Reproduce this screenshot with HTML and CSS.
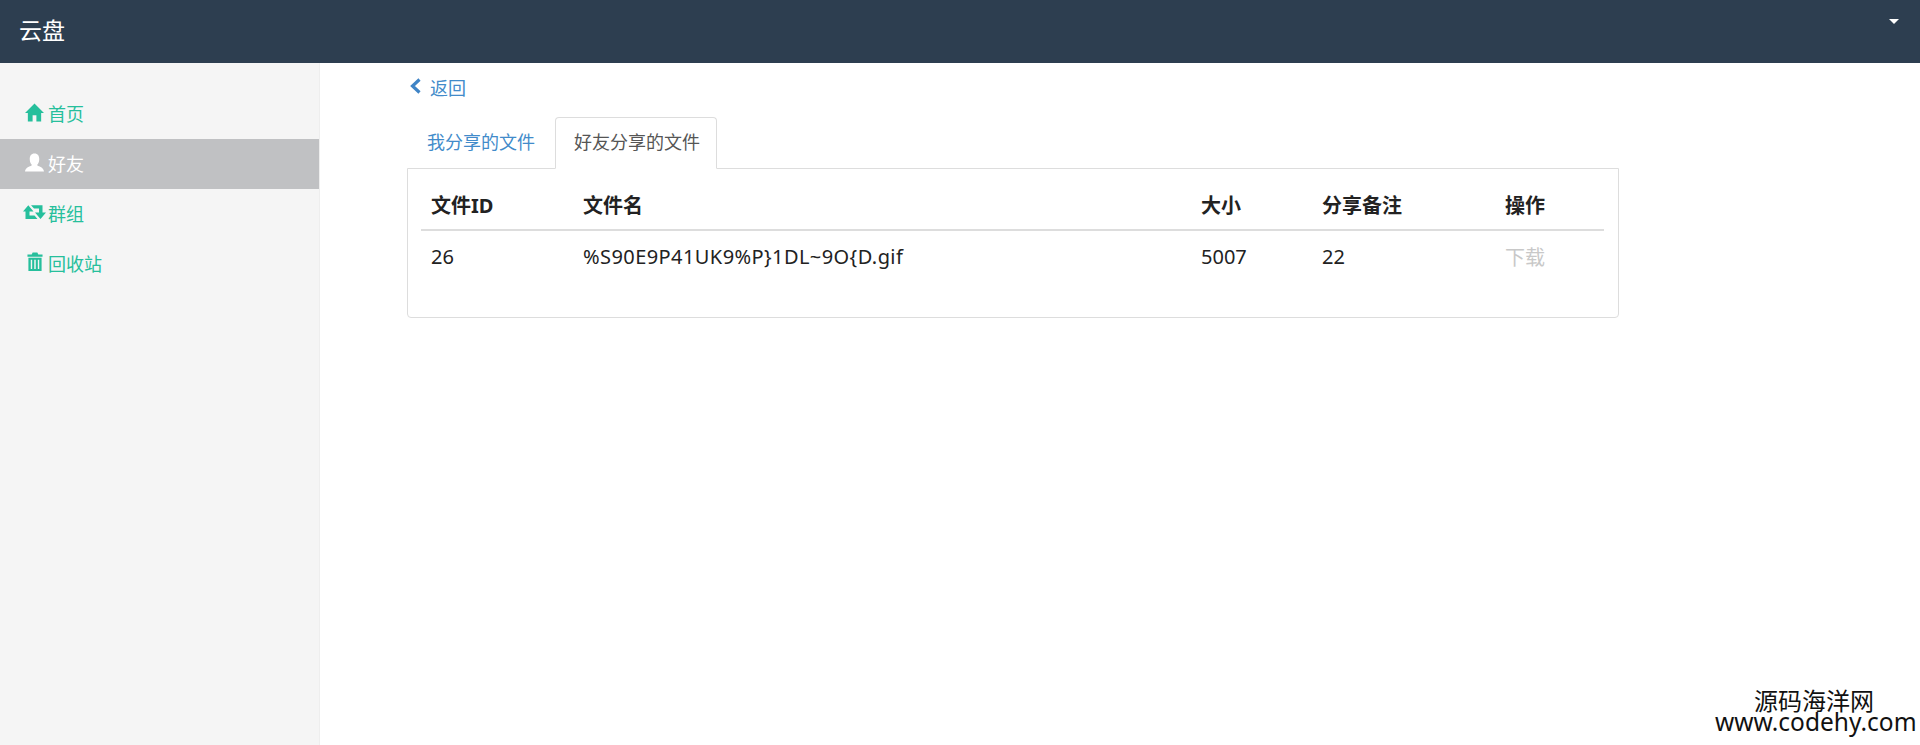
FILE: index.html
```html
<!DOCTYPE html>
<html lang="zh-CN">
<head>
<meta charset="utf-8">
<title>云盘</title>
<link rel="stylesheet" href="styles.css">
</head>
<body>
<header class="navbar">
  <span class="brand">云盘</span>
  <span class="caret"></span>
</header>
<div class="layout">
  <nav class="sidebar">
    <a class="side-item"><svg class="icon" viewBox="0 0 20 20"><path d="M10 0.5 L20 10.5 H17 V19.5 H12 V13 H8 V19.5 H3 V10.5 H0 Z" fill="currentColor"/></svg><span>首页</span></a>
    <a class="side-item active"><svg class="icon" viewBox="0 0 20 20"><path d="M10 0.5 C13.5 0.5 15 3 15 6.5 C15 9 14 11 13 12.2 V13.2 C15 14.5 19.5 15 20 19.5 H0 C0.5 15 5 14.5 7 13.2 V12.2 C6 11 5 9 5 6.5 C5 3 6.5 0.5 10 0.5 Z" fill="currentColor"/></svg><span>好友</span></a>
    <a class="side-item"><svg class="icon wide" viewBox="0 0 23 14"><path d="M5.3 0.2 L10.5 6.5 H6.5 V10.5 H11.5 L14.5 14 H2.5 V6.5 H0 Z" fill="currentColor"/><path d="M17.5 14 L12 7.5 H16 V3.5 H11 L8 0.2 H19.5 V7.5 H23 Z" fill="currentColor"/></svg><span>群组</span></a>
    <a class="side-item"><svg class="icon trash" viewBox="0 0 17 20"><path d="M6 0 H11 L12 2 H16.5 V4.5 H0.5 V2 H5 Z M1.5 5.5 H15.5 V19.5 H1.5 Z M4 7.5 V17.5 H5.5 V7.5 Z M7.7 7.5 V17.5 H9.3 V7.5 Z M11.5 7.5 V17.5 H13 V7.5 Z" fill="currentColor" fill-rule="evenodd"/></svg><span>回收站</span></a>
  </nav>
  <main class="content">
    <a class="back"><svg class="chevron" viewBox="0 0 13 16"><path d="M10.5 1.5 L3.5 8 L10.5 14.5" fill="none" stroke="currentColor" stroke-width="3.2"/></svg><span>返回</span></a>
    <div class="tabs">
      <a class="tab">我分享的文件</a>
      <a class="tab current">好友分享的文件</a>
    </div>
    <section class="panel">
      <table class="files">
        <colgroup>
          <col class="c1"><col class="c2"><col class="c3"><col class="c4"><col class="c5">
        </colgroup>
        <thead>
          <tr><th>文件ID</th><th>文件名</th><th>大小</th><th>分享备注</th><th>操作</th></tr>
        </thead>
        <tbody>
          <tr><td>26</td><td class="fname">%S90E9P41UK9%P}1DL~9O{D.gif</td><td>5007</td><td>22</td><td class="muted">下载</td></tr>
        </tbody>
      </table>
    </section>
  </main>
</div>
<div class="watermark">
  <div class="wm-cn">源码海洋网</div>
  <div class="wm-url">www.codehy.com</div>
</div>
</body>
</html>
```

FILE: styles.css
```css
* { box-sizing: border-box; }
html, body { height: 100%; }
body {
  margin: 0;
  height: 745px;
  overflow: hidden;
  background: #fff;
  color: #222;
  font-family: "Noto Sans", "Noto Sans CJK SC", sans-serif;
  display: flex;
  flex-direction: column;
  position: relative;
}
.navbar {
  height: 63px;
  flex: none;
  background: #2d3e50;
  color: #fff;
  display: flex;
  justify-content: space-between;
  align-items: flex-start;
  padding: 0 21px 0 19px;
}
.brand { font-size: 23px; line-height: 61px; }
.caret {
  margin-top: 19px;
  width: 0;
  height: 0;
  border-left: 5px solid transparent;
  border-right: 5px solid transparent;
  border-top: 5px solid #fff;
}
.layout { flex: 1; display: flex; min-height: 0; }
.sidebar {
  width: 320px;
  flex: none;
  background: #f5f5f5;
  border-right: 1px solid #eee;
  padding-top: 26px;
}
.side-item {
  height: 50px;
  display: flex;
  align-items: center;
  padding-left: 25px;
  padding-bottom: 2px;
  color: #26bf9c;
  font-size: 18px;
}
.side-item.active { background: #c0c1c3; color: #fff; }
.icon { width: 19px; height: 19px; margin-right: 4px; margin-top: -1px; flex: none; }
.icon.wide { width: 23px; height: 14px; margin-left: -2px; margin-right: 2px; margin-top: -3px; }
.icon.trash { width: 16px; height: 20px; margin-left: 2px; margin-right: 5px; margin-top: -3px; }
.content { flex: 1; padding: 0 0 0 87px; min-width: 0; }
.back {
  display: flex;
  align-items: center;
  height: 48px;
  padding-left: 2px;
  color: #428bca;
  font-size: 18px;
}
.chevron { width: 13px; height: 16px; margin-right: 8px; margin-top: -2px; color: #3f84c6; }
.tabs { display: flex; height: 52px; padding-left: 1px; position: relative; margin-top: 6px; }
.tab {
  height: 52px;
  padding: 0 18px;
  margin-right: 1px;
  border: 1px solid transparent;
  border-radius: 4px 4px 0 0;
  font-size: 18px;
  line-height: 49px;
  color: #428bca;
}
.tab.current {
  padding: 0 16px 0 18px;
  color: #555;
  background: #fff;
  border-color: #ddd;
  border-bottom-color: #fff;
  position: relative;
  z-index: 1;
}
.panel {
  width: 1212px;
  height: 150px;
  margin-top: -1px;
  padding: 0 13px;
  border: 1px solid #ddd;
  border-radius: 0 0 4px 4px;
  position: relative;
}
.files { width: 1183px; table-layout: fixed; border-collapse: collapse; font-size: 20px; }
.c1 { width: 152px; }
.c2 { width: 618px; }
.c3 { width: 121px; }
.c4 { width: 183px; }
.c5 { width: 109px; }
.files th, .files td { text-align: left; padding: 0 10px; white-space: nowrap; }
.files th { height: 61px; padding-top: 10px; font-weight: 700; border-bottom: 2px solid #ddd; }
.files td { height: 50px; padding-top: 1px; color: #222; }
.files td.fname { letter-spacing: 0.42px; }
.files td.muted { color: #c8c8c8; }
.watermark {
  position: absolute;
  right: 5px;
  bottom: 13px;
  width: 200px;
  text-align: center;
  color: #111;
}
.wm-cn { font-size: 24px; line-height: 20px; padding-right: 2px; }
.wm-url { font-size: 24.5px; line-height: 20px; padding-top: 1px; white-space: nowrap; }
```
